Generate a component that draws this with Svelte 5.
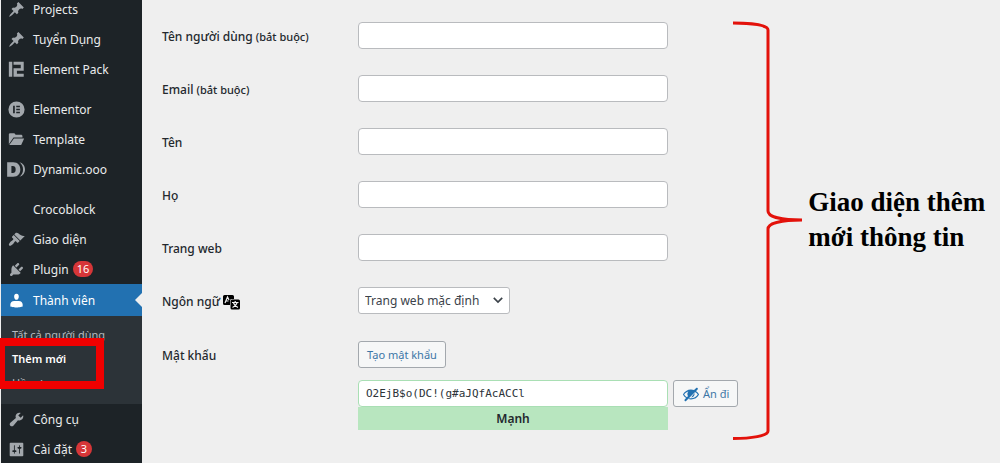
<script>
  const MENU = [
    { label: 'Projects', icon: 'pin' },
    { label: 'Tuyển Dụng', icon: 'pin' },
    { label: 'Element Pack', icon: 'pack' },
    { label: 'Elementor', icon: 'elementor', gap: true },
    { label: 'Template', icon: 'folder' },
    { label: 'Dynamic.ooo', icon: 'dynamic' },
    { label: 'Crocoblock', icon: '', gap: true },
    { label: 'Giao diện', icon: 'brush' },
    { label: 'Plugin', icon: 'plug', count: 16 },
    { label: 'Thành viên', icon: 'user', current: true, sub: ['Tất cả người dùng', 'Thêm mới', 'Hồ sơ'] },
    { label: 'Công cụ', icon: 'wrench' },
    { label: 'Cài đặt', icon: 'sliders', count: 3 },
  ];

  // 20x20 glyphs
  const ICONS = {
    pin: 'M10.44 3.02l1.82-1.82 6.36 6.35-1.83 1.82c-1.05-.68-2.48-.57-3.41.36l-.75.75c-.92.93-1.04 2.35-.35 3.41l-1.83 1.82-2.41-2.41-2.8 2.79c-.42.42-3.38 2.71-3.8 2.29s1.86-3.39 2.28-3.81l2.79-2.79L4.1 9.36l1.83-1.82c1.05.69 2.48.57 3.4-.36l.75-.75c.93-.92 1.05-2.35.36-3.41z',
    pack: 'M1 1h4v17.500H1zM6.500 1h12v10.500H10.500V15h8v3.500h-12V8.500H15V4.500H6.500z',
    elementor: 'M10 .5a9.500 9.500 0 1 0 0 19 9.500 9.500 0 0 0 0-19zM6 5.500h2v9H6zM9.700 5.500H14v1.800H9.700zM9.700 9.100H14v1.800H9.700zM9.700 12.700H14v1.800H9.700z',
    folder: 'M1 3.500L2 2.500h5.500l1.500 2h7l1 1V7.500H6.500L1 15.500zM1.500 16.500L7 8.700h12l-3.500 7.800z',
    dynamic: 'M-1 1.500h7c6 0 8.500 4 8.500 8.500S12 18.500 6 18.500h-7zM4 6v8h1.500c2.800 0 3.500-1.500 3.500-4s-.7-4-3.500-4zM13.500 1.500c4.500 1 6.500 5 6.500 8.500s-2 7.500-6.500 8.500c2.800-2 4.200-5 4.200-8.500s-1.400-6.500-4.200-8.500z',
    brush: 'M14.48 11.06L7.41 3.99l1.5-1.5c.5-.56 2.3-.47 3.51.32 1.21.8 1.43 1.28 2.91 2.1 1.18.64 2.45 1.26 4.45.85zm-.71.71L6.7 4.7 4.93 6.47c-.39.39-.39 1.02 0 1.41l1.06 1.06c.39.39.39 1.03 0 1.42-.6.6-1.43 1.11-2.21 1.69-.35.26-.7.53-1.01.84C1.43 14.23.4 16.08 1.4 17.07c.99 1 2.84-.03 4.18-1.36.31-.31.58-.66.85-1.02.57-.78 1.08-1.61 1.69-2.21.39-.39 1.02-.39 1.41 0l1.06 1.06c.39.39 1.02.39 1.41 0z',
    plug: 'M13.11 4.36L9.87 7.6 8 5.73l3.24-3.24c.35-.34 1.05-.2 1.56.32.52.51.66 1.21.31 1.55zm-8 1.77l.91-1.12 9.01 9.01-1.19.84c-.71.71-2.63 1.16-3.82 1.16H6.14L4.9 17.26c-.59.59-1.54.59-2.12 0-.59-.58-.59-1.53 0-2.12l1.24-1.24v-3.88c0-1.13.4-3.19 1.09-3.89zm7.26 3.97l3.24-3.24c.34-.35 1.04-.21 1.55.31.52.51.66 1.21.31 1.55l-3.24 3.25z',
    user: 'M10 9.25c-2.27 0-2.73-3.44-2.73-3.44C7 4.02 7.82 2 9.97 2c2.16 0 2.98 2.02 2.71 3.81 0 0-.41 3.44-2.68 3.44zM7.300 10.500h5.400c2.800 0 4.540 2 4.540 4v2.520s-3.650 1.130-7.240 1.130c-3.650 0-7.240-1.130-7.240-1.130V14.500c0-2 1.740-4 4.540-4z',
    wrench: 'M16.68 9.77c-1.34 1.34-3.3 1.67-4.95.99l-5.41 6.52c-.99.99-2.59.99-3.58 0s-.99-2.59 0-3.57l6.52-5.42c-.68-1.65-.35-3.61.99-4.95 1.28-1.28 3.12-1.62 4.72-1.06l-2.89 2.89 2.82 2.82 2.86-2.87c.53 1.58.18 3.39-1.08 4.65z',
    sliders: 'M18 17V3c0-.55-.45-1-1-1H3c-.55 0-1 .45-1 1v14c0 .55.45 1 1 1h14c.55 0 1-.45 1-1zM8 11h1c.55 0 1 .45 1 1s-.45 1-1 1H8v1.500c0 .28-.22.500-.500.500s-.500-.22-.500-.500V13H6c-.55 0-1-.45-1-1s.45-1 1-1h1V5.500c0-.28.22-.500.500-.500s.500.22.500.500V11zm5-2h-1c-.55 0-1-.45-1-1s.45-1 1-1h1V5.500c0-.28.22-.500.500-.500s.500.22.500.500V7h1c.55 0 1 .45 1 1s-.45 1-1 1h-1v5.500c0 .28-.22.500-.500.500s-.500-.22-.500-.500V9z',
  };

  const FIELDS = [
    { id: 'user_login', label: 'Tên người dùng', required: true },
    { id: 'email', label: 'Email', required: true },
    { id: 'first_name', label: 'Tên' },
    { id: 'last_name', label: 'Họ' },
    { id: 'url', label: 'Trang web' },
  ];

  let password = $state('O2EjB$o(DC!(g#aJQfAcACCl');
  let hidden = $state(false);
</script>

<div class="admin">
  <nav class="sidebar">
    <ul class="menu">
      {#each MENU as item}
        <li class:gap={item.gap}>
          <a href="#menu" class="item" class:current={item.current}>
            <svg class="icon" viewBox="0 0 20 20" aria-hidden="true">
              {#if item.icon}<path fill-rule="evenodd" d={ICONS[item.icon]} />{/if}
            </svg>
            <span>{item.label}</span>
            {#if item.count}<span class="count">{item.count}</span>{/if}
          </a>
          {#if item.sub}
            <ul class="submenu">
              {#each item.sub as s, i}
                <li class:marked={i === 1}><a href="#sub">{s}</a></li>
              {/each}
            </ul>
          {/if}
        </li>
      {/each}
    </ul>
  </nav>

  <main>
    <form>
      {#each FIELDS as f}
        <div class="row">
          <label for={f.id}>{f.label} {#if f.required}<small>(bắt buộc)</small>{/if}</label>
          <input class="box" id={f.id} type="text" />
        </div>
      {/each}

      <div class="row">
        <label for="locale">Ngôn ngữ
          <svg class="lang" viewBox="0 0 17 15" aria-hidden="true">
            <path d="M1.500 0h8q1.500 0 1.500 1.500V4H8.500Q7 4 7 5.500V10H1.500Q0 10 0 8.500v-7Q0 0 1.500 0z" />
            <rect x="7.500" y="4.500" width="9.500" height="10" rx="1.500" />
            <path class="line" d="M2 8l2.500-6 1.500 3M3 6h2.500M9 7.500h6.500M12.200 6v1.500M14 8q-1 3-4.500 4.500M10.500 8q1 3 4.500 4.500" />
          </svg>
        </label>
        <div class="select">
          <select id="locale"><option>Trang web mặc định</option></select>
          <svg viewBox="0 0 20 20" aria-hidden="true"><path d="M4 7l6 6 6-6" /></svg>
        </div>
      </div>

      <div class="row password">
        <label for="pass1">Mật khẩu</label>
        <div class="pass-area">
          <button type="button" class="button">Tạo mật khẩu</button>
          <div class="pass-line">
            <div class="pass-wrap">
              <input class="box pass" id="pass1" type={hidden ? 'password' : 'text'} bind:value={password} spellcheck="false" />
              <div class="strength">Mạnh</div>
            </div>
            <button type="button" class="button hide" onclick={() => (hidden = !hidden)}>
              <svg viewBox="0 0 20 20" aria-hidden="true">
                <path d="M17.200 3.300l.16.17c.39.39.39 1.020 0 1.410L4.550 17.700c-.39.39-1.030.39-1.410 0l-.17-.17c-.39-.39-.39-1.020 0-1.410l1.590-1.600C3 13.500 1.800 12.200 1 10.590c.81-1.650 2.030-2.980 3.640-3.990S8.040 5.090 10 5.090c1.200 0 2.330.21 3.400.6l2.380-2.390c.39-.39 1.030-.39 1.420 0zM2.400 10.590c.69 1.230 1.710 2.250 3.050 3.050l1.280-1.280C6.220 11.670 5.960 10.890 5.960 10c0-1.060.36-1.980 1.090-2.760C6 7.500 5.090 7.940 4.290 8.500c-.8.580-1.430 1.270-1.890 2.090zM15.400 6.700c1.500.9 2.800 2.200 3.600 3.890-1.600 3.400-5.200 5.500-9 5.500-1 0-2-.1-2.900-.4l1.100-1.100c.6.1 1.200.2 1.800.2 3.200 0 6-1.600 7.500-4.200-.8-1.300-1.800-2.200-3.100-2.900zM13.900 9c.5 2.500-.8 4.500-3.700 4.900z" />
              </svg>
              Ẩn đi
            </button>
          </div>
        </div>
      </div>
    </form>

    <aside class="note">
      <svg class="brace" viewBox="0 0 69 420" aria-hidden="true">
        <path d="M0 2C18 2 35 4 35 9V190C35 196 49 199 69 199C49 199 35 202 35 208V410C35 415 18 417.500 0 417.500" />
      </svg>
      <p>Giao diện thêm mới thông tin</p>
    </aside>
  </main>
</div>

<style>
  :global(body) { margin: 0; background: #efefef; }

  .admin {
    display: flex; min-height: 100vh; overflow: hidden;
    font-family: 'Noto Sans', 'Open Sans', sans-serif;
    font-size: 12px; color: #23282d;
  }
  ul { list-style: none; margin: 0; padding: 0; }
  a { color: inherit; text-decoration: none; }

  /* Sidebar */
  .sidebar {
    flex: 0 0 141px; margin-left: 1px;
    background: #1d2327; color: #eaebec;
  }
  /* the list is scrolled a little past its first entry */
  .menu { margin-top: -6px; }
  .gap { margin-top: 10px; }
  .item {
    position: relative; display: flex; align-items: center;
    height: 30px; padding-left: 7px;
  }
  .icon { width: 17px; height: 17px; margin-right: 8px; fill: #a2a7ac; overflow: visible; }
  .count {
    min-width: 8px; margin-left: 4px; padding: 0 4px;
    border-radius: 8px; background: #d63638; color: #fff;
    font-size: 11px; line-height: 16px; text-align: center;
  }
  .current { background: #2271b1; color: #fff; height: 32px; }
  .current .icon { fill: #fff; }
  .current::after {
    content: ''; position: absolute; right: 0; top: 9px;
    border: 7px solid transparent; border-left: 0; border-right-color: #efefef;
  }
  .submenu { padding: 7px 0 9px; background: #2c3338; color: #b5babf; }
  .submenu li { position: relative; padding-left: 11px; font-size: 11px; line-height: 24px; }
  .marked { color: #fff; font-weight: 600; }
  .marked::after {
    content: ''; position: absolute; z-index: 1;
    left: -1px; top: -9px; width: 91px; height: 35px;
    border: 8px solid #f00000; border-left-width: 5px;
  }

  /* Form */
  main { flex: 1; display: flex; align-items: flex-start; padding: 22px 8px 0 20px; }
  form { flex: 0 0 576px; }
  .row { display: flex; align-items: flex-start; margin-bottom: 24px; }
  label { flex: 0 0 196px; font-weight: 500; line-height: 29px; }
  small { font-size: 11px; }
  .lang { width: 17px; height: 15px; vertical-align: middle; }
  .lang .line { fill: none; stroke: #efefef; stroke-width: 1.2; }
  .box {
    box-sizing: border-box; flex: 0 1 310px; width: 310px; height: 27px;
    border: 1px solid #b9bbbe; border-radius: 4px; background: #fff;
    padding: 0 7px; font: inherit; color: #2c3338;
  }
  .select { position: relative; }
  select {
    appearance: none; box-sizing: border-box; width: 152px; height: 27px;
    border: 1px solid #b9bbbe; border-radius: 3px; background: #fff;
    padding: 0 24px 0 6px; font: inherit; color: #3c434a;
  }
  .select svg {
    position: absolute; right: 5px; top: 6px; width: 14px; height: 14px;
    fill: none; stroke: #3c434a; stroke-width: 2.4; pointer-events: none;
  }
  .password { padding-top: 1px; margin-bottom: 0; }
  .button {
    height: 27px; padding: 0 8px; border: 1px solid #a3a8ad; border-radius: 3px;
    background: #f6f7f7; color: #3c76a6; font: inherit; font-size: 11px;
    white-space: nowrap;
  }
  .pass-line { display: flex; align-items: flex-start; gap: 5px; margin-top: 12px; }
  .pass { display: block; border-color: #a9dfb4; font-family: 'DejaVu Sans Mono', monospace; font-size: 11px; }
  .strength {
    background: #b8e6bf; text-align: center; font-weight: 600; font-size: 12px; line-height: 23px;
  }
  .hide { display: flex; align-items: center; gap: 3px; }
  .hide svg { width: 18px; height: 18px; fill: #2271b1; }

  /* Annotation */
  .note { flex: 1; display: flex; align-items: center; margin: -1px 0 0 -5px; }
  .brace { flex: none; width: 69px; height: 420px; fill: none; stroke: #e3120b; stroke-width: 3; }
  .note p {
    width: 184px; margin: 0 0 22px 6px;
    font: bold 27px/35px 'Liberation Serif', serif; color: #000;
  }
</style>
